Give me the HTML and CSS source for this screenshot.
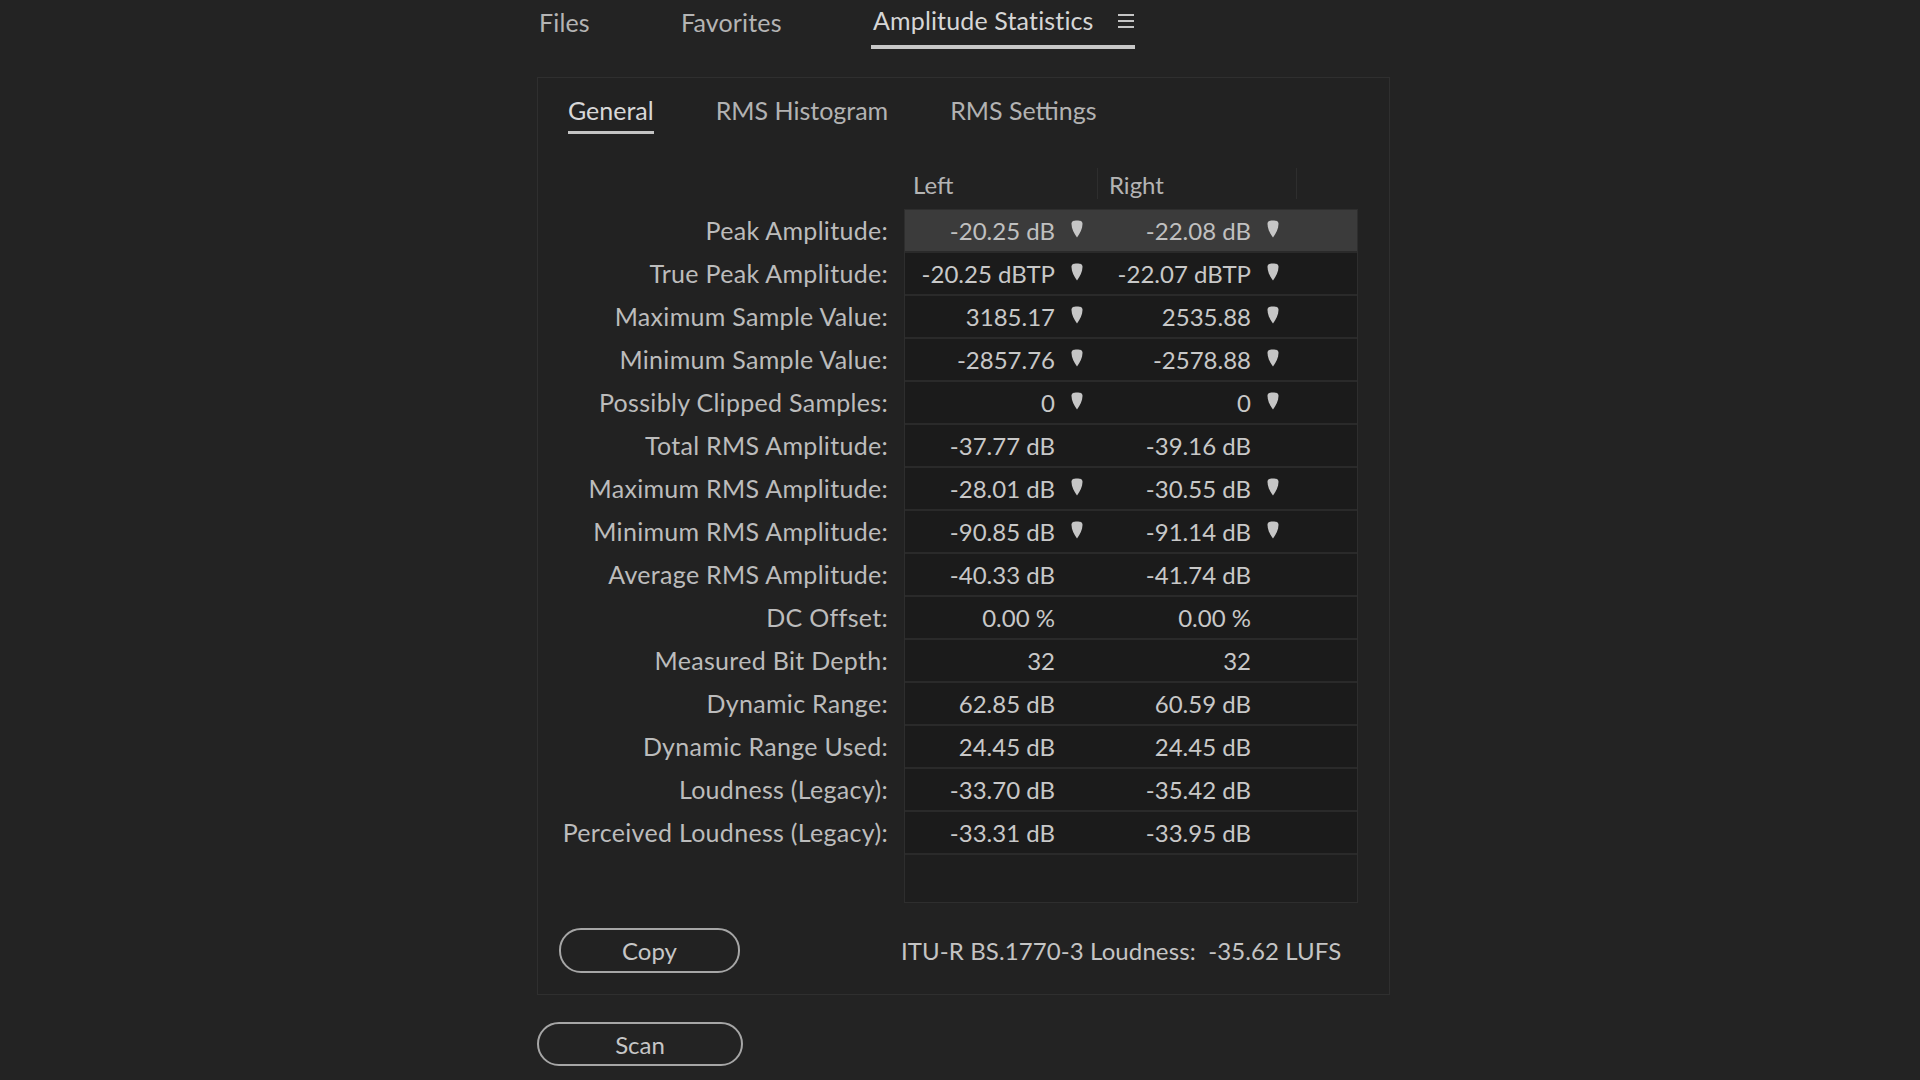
FILE: index.html
```html
<!DOCTYPE html>
<html lang="en">
<head>
<meta charset="utf-8">
<title>Amplitude Statistics</title>
<link rel="stylesheet" href="styles.css">
</head>
<body>
<div class="app">
  <nav class="top-tabs">
    <div class="top-tab t-files">Files</div>
    <div class="top-tab t-fav">Favorites</div>
    <div class="top-tab t-amp active">
      <span>Amplitude Statistics</span>
      <svg class="menu" width="18" height="16" viewBox="0 0 18 16"><rect x="1" y="1" width="16" height="2" fill="#c4c4c4"/><rect x="1" y="7" width="16" height="2" fill="#c4c4c4"/><rect x="1" y="13" width="16" height="2" fill="#c4c4c4"/></svg>
    </div>
  </nav>

  <section class="panel">
    <nav class="sub-tabs">
      <div class="sub-tab active">General</div>
      <div class="sub-tab">RMS Histogram</div>
      <div class="sub-tab">RMS Settings</div>
    </nav>

    <div class="stats">
      <div class="col-head">
        <div class="h h1">Left</div>
        <div class="h h2">Right</div>
      </div>
      <div class="labels">
        <div class="label">Peak Amplitude:</div>
        <div class="label">True Peak Amplitude:</div>
        <div class="label">Maximum Sample Value:</div>
        <div class="label">Minimum Sample Value:</div>
        <div class="label">Possibly Clipped Samples:</div>
        <div class="label">Total RMS Amplitude:</div>
        <div class="label">Maximum RMS Amplitude:</div>
        <div class="label">Minimum RMS Amplitude:</div>
        <div class="label">Average RMS Amplitude:</div>
        <div class="label">DC Offset:</div>
        <div class="label">Measured Bit Depth:</div>
        <div class="label">Dynamic Range:</div>
        <div class="label">Dynamic Range Used:</div>
        <div class="label">Loudness (Legacy):</div>
        <div class="label">Perceived Loudness (Legacy):</div>
      </div>
      <div class="table">
        <div class="row hl">
          <div class="cell c1"><span class="v">-20.25 dB</span><span class="slot"><svg class="pin" viewBox="0 0 12 18"><path d="M0.5 3.8C0.5 1.2 2.5 0.5 6 0.5S11.5 1.2 11.5 3.8C11.5 9 9 13.5 6 17.5C3 13.5 0.5 9 0.5 3.8Z"/></svg></span></div>
          <div class="cell c2"><span class="v">-22.08 dB</span><span class="slot"><svg class="pin" viewBox="0 0 12 18"><path d="M0.5 3.8C0.5 1.2 2.5 0.5 6 0.5S11.5 1.2 11.5 3.8C11.5 9 9 13.5 6 17.5C3 13.5 0.5 9 0.5 3.8Z"/></svg></span></div>
        </div>
        <div class="row">
          <div class="cell c1"><span class="v">-20.25 dBTP</span><span class="slot"><svg class="pin" viewBox="0 0 12 18"><path d="M0.5 3.8C0.5 1.2 2.5 0.5 6 0.5S11.5 1.2 11.5 3.8C11.5 9 9 13.5 6 17.5C3 13.5 0.5 9 0.5 3.8Z"/></svg></span></div>
          <div class="cell c2"><span class="v">-22.07 dBTP</span><span class="slot"><svg class="pin" viewBox="0 0 12 18"><path d="M0.5 3.8C0.5 1.2 2.5 0.5 6 0.5S11.5 1.2 11.5 3.8C11.5 9 9 13.5 6 17.5C3 13.5 0.5 9 0.5 3.8Z"/></svg></span></div>
        </div>
        <div class="row">
          <div class="cell c1"><span class="v">3185.17</span><span class="slot"><svg class="pin" viewBox="0 0 12 18"><path d="M0.5 3.8C0.5 1.2 2.5 0.5 6 0.5S11.5 1.2 11.5 3.8C11.5 9 9 13.5 6 17.5C3 13.5 0.5 9 0.5 3.8Z"/></svg></span></div>
          <div class="cell c2"><span class="v">2535.88</span><span class="slot"><svg class="pin" viewBox="0 0 12 18"><path d="M0.5 3.8C0.5 1.2 2.5 0.5 6 0.5S11.5 1.2 11.5 3.8C11.5 9 9 13.5 6 17.5C3 13.5 0.5 9 0.5 3.8Z"/></svg></span></div>
        </div>
        <div class="row">
          <div class="cell c1"><span class="v">-2857.76</span><span class="slot"><svg class="pin" viewBox="0 0 12 18"><path d="M0.5 3.8C0.5 1.2 2.5 0.5 6 0.5S11.5 1.2 11.5 3.8C11.5 9 9 13.5 6 17.5C3 13.5 0.5 9 0.5 3.8Z"/></svg></span></div>
          <div class="cell c2"><span class="v">-2578.88</span><span class="slot"><svg class="pin" viewBox="0 0 12 18"><path d="M0.5 3.8C0.5 1.2 2.5 0.5 6 0.5S11.5 1.2 11.5 3.8C11.5 9 9 13.5 6 17.5C3 13.5 0.5 9 0.5 3.8Z"/></svg></span></div>
        </div>
        <div class="row">
          <div class="cell c1"><span class="v">0</span><span class="slot"><svg class="pin" viewBox="0 0 12 18"><path d="M0.5 3.8C0.5 1.2 2.5 0.5 6 0.5S11.5 1.2 11.5 3.8C11.5 9 9 13.5 6 17.5C3 13.5 0.5 9 0.5 3.8Z"/></svg></span></div>
          <div class="cell c2"><span class="v">0</span><span class="slot"><svg class="pin" viewBox="0 0 12 18"><path d="M0.5 3.8C0.5 1.2 2.5 0.5 6 0.5S11.5 1.2 11.5 3.8C11.5 9 9 13.5 6 17.5C3 13.5 0.5 9 0.5 3.8Z"/></svg></span></div>
        </div>
        <div class="row">
          <div class="cell c1"><span class="v">-37.77 dB</span><span class="slot"></span></div>
          <div class="cell c2"><span class="v">-39.16 dB</span><span class="slot"></span></div>
        </div>
        <div class="row">
          <div class="cell c1"><span class="v">-28.01 dB</span><span class="slot"><svg class="pin" viewBox="0 0 12 18"><path d="M0.5 3.8C0.5 1.2 2.5 0.5 6 0.5S11.5 1.2 11.5 3.8C11.5 9 9 13.5 6 17.5C3 13.5 0.5 9 0.5 3.8Z"/></svg></span></div>
          <div class="cell c2"><span class="v">-30.55 dB</span><span class="slot"><svg class="pin" viewBox="0 0 12 18"><path d="M0.5 3.8C0.5 1.2 2.5 0.5 6 0.5S11.5 1.2 11.5 3.8C11.5 9 9 13.5 6 17.5C3 13.5 0.5 9 0.5 3.8Z"/></svg></span></div>
        </div>
        <div class="row">
          <div class="cell c1"><span class="v">-90.85 dB</span><span class="slot"><svg class="pin" viewBox="0 0 12 18"><path d="M0.5 3.8C0.5 1.2 2.5 0.5 6 0.5S11.5 1.2 11.5 3.8C11.5 9 9 13.5 6 17.5C3 13.5 0.5 9 0.5 3.8Z"/></svg></span></div>
          <div class="cell c2"><span class="v">-91.14 dB</span><span class="slot"><svg class="pin" viewBox="0 0 12 18"><path d="M0.5 3.8C0.5 1.2 2.5 0.5 6 0.5S11.5 1.2 11.5 3.8C11.5 9 9 13.5 6 17.5C3 13.5 0.5 9 0.5 3.8Z"/></svg></span></div>
        </div>
        <div class="row">
          <div class="cell c1"><span class="v">-40.33 dB</span><span class="slot"></span></div>
          <div class="cell c2"><span class="v">-41.74 dB</span><span class="slot"></span></div>
        </div>
        <div class="row">
          <div class="cell c1"><span class="v">0.00 %</span><span class="slot"></span></div>
          <div class="cell c2"><span class="v">0.00 %</span><span class="slot"></span></div>
        </div>
        <div class="row">
          <div class="cell c1"><span class="v">32</span><span class="slot"></span></div>
          <div class="cell c2"><span class="v">32</span><span class="slot"></span></div>
        </div>
        <div class="row">
          <div class="cell c1"><span class="v">62.85 dB</span><span class="slot"></span></div>
          <div class="cell c2"><span class="v">60.59 dB</span><span class="slot"></span></div>
        </div>
        <div class="row">
          <div class="cell c1"><span class="v">24.45 dB</span><span class="slot"></span></div>
          <div class="cell c2"><span class="v">24.45 dB</span><span class="slot"></span></div>
        </div>
        <div class="row">
          <div class="cell c1"><span class="v">-33.70 dB</span><span class="slot"></span></div>
          <div class="cell c2"><span class="v">-35.42 dB</span><span class="slot"></span></div>
        </div>
        <div class="row">
          <div class="cell c1"><span class="v">-33.31 dB</span><span class="slot"></span></div>
          <div class="cell c2"><span class="v">-33.95 dB</span><span class="slot"></span></div>
        </div>
        <div class="filler"></div>
      </div>
    </div>

    <div class="footer">
      <button class="btn copy">Copy</button>
      <div class="itu">ITU-R BS.1770-3 Loudness:&nbsp; -35.62 LUFS</div>
    </div>
  </section>

  <button class="btn scan">Scan</button>
</div>
</body>
</html>
```

FILE: styles.css
```css
* { box-sizing: border-box; }

html, body {
  margin: 0;
  padding: 0;
  background: #232323;
}

body {
  width: 1920px;
  height: 1080px;
  overflow: hidden;
  font-family: "Lato", "Liberation Sans", sans-serif;
  font-size: 24px;
  color: #bababa;
}

.app {
  margin-left: 537px;
  width: 853px;
  display: flex;
  flex-direction: column;
  align-items: flex-start;
}

/* top tabs */
.top-tabs {
  display: flex;
  height: 49px;
  width: 100%;
  margin-bottom: 28px;
}

.top-tab {
  height: 49px;
  line-height: 44px;
  font-size: 25px;
  letter-spacing: 0.15px;
  color: #b4b4b4;
  white-space: nowrap;
}

.t-files { width: 144px; padding-left: 2px; }
.t-fav { width: 190px; }
.t-amp {
  width: 264px;
  padding-left: 2px;
  display: flex;
  align-items: center;
  height: 49px;
  padding-bottom: 5px;
  justify-content: space-between;
  border-bottom: 4px solid #c8c8c8;
  color: #d6d6d6;
}
.t-amp .menu { display: block; margin-top: 2px; }

/* panel */
.panel {
  width: 853px;
  height: 918px;
  border: 1px solid #2f2f2f;
  background: #222222;
  display: flex;
  flex-direction: column;
}

.sub-tabs {
  display: flex;
  gap: 62px;
  padding-left: 30px;
  padding-top: 12px;
}

.sub-tab {
  line-height: 40px;
  font-size: 25px;
  color: #b2b2b2;
  padding-bottom: 1px;
  border-bottom: 3px solid transparent;
}
.sub-tab.active {
  color: #d8d8d8;
  border-bottom-color: #c4c4c4;
}

/* stats grid */
.stats {
  display: grid;
  grid-template-columns: 350px 454px;
  grid-template-rows: auto auto;
  column-gap: 16px;
  margin-top: 34px;
}

.col-head {
  grid-column: 2;
  grid-row: 1;
  display: flex;
  height: 34px;
  padding-left: 1px;
  margin-bottom: 7px;
}

.h {
  line-height: 34px;
  color: #b4b4b4;
  border-right: 1px solid #2e2e2e;
  height: 31px;
}
.h1 { width: 193px; padding-left: 8px; }
.h2 { width: 199px; padding-left: 11px; }

.labels {
  grid-column: 1;
  grid-row: 2;
  padding-top: 1px;
  display: flex;
  flex-direction: column;
  gap: 2px;
}

.label {
  height: 41px;
  line-height: 41px;
  font-size: 25px;
  letter-spacing: 0.3px;
  text-align: right;
  color: #bcbcbc;
  white-space: nowrap;
}

.table {
  grid-column: 2;
  grid-row: 2;
  border: 1px solid #2e2e2e;
  background: #2a2a2a;
  display: flex;
  flex-direction: column;
  gap: 2px;
}

.row {
  height: 41px;
  background: #1b1b1b;
  display: flex;
}
.row.hl {
  background: #3b3b3b;
}

.cell {
  display: flex;
  align-items: center;
  justify-content: flex-end;
  color: #c8c8c8;
  white-space: nowrap;
}
.c1 { width: 193px; }
.c2 { width: 196px; }
.row.hl .cell { color: #c0c0c0; }

.slot {
  width: 43px;
  height: 100%;
  padding-left: 16px;
  display: flex;
  align-items: center;
}

.pin {
  width: 12px;
  height: 18px;
  fill: #c6c6c6;
  margin-top: -3px;
}

.filler {
  height: 47px;
  background: #1e1e1e;
}

/* footer */
.footer {
  display: flex;
  align-items: center;
  margin-top: 25px;
  padding-left: 21px;
}

.btn {
  font-family: "Lato", "Liberation Sans", sans-serif;
  font-size: 24px;
  color: #c6c6c6;
  background: transparent;
  border: 2.5px solid #a6a6a6;
  border-radius: 22px;
  padding: 0;
  cursor: pointer;
}

.copy {
  width: 181px;
  height: 45px;
  margin-right: 161px;
}

.itu {
  color: #c4c4c4;
  white-space: nowrap;
  letter-spacing: 0.1px;
}

.scan {
  width: 206px;
  height: 44px;
  margin-top: 27px;
}
```
